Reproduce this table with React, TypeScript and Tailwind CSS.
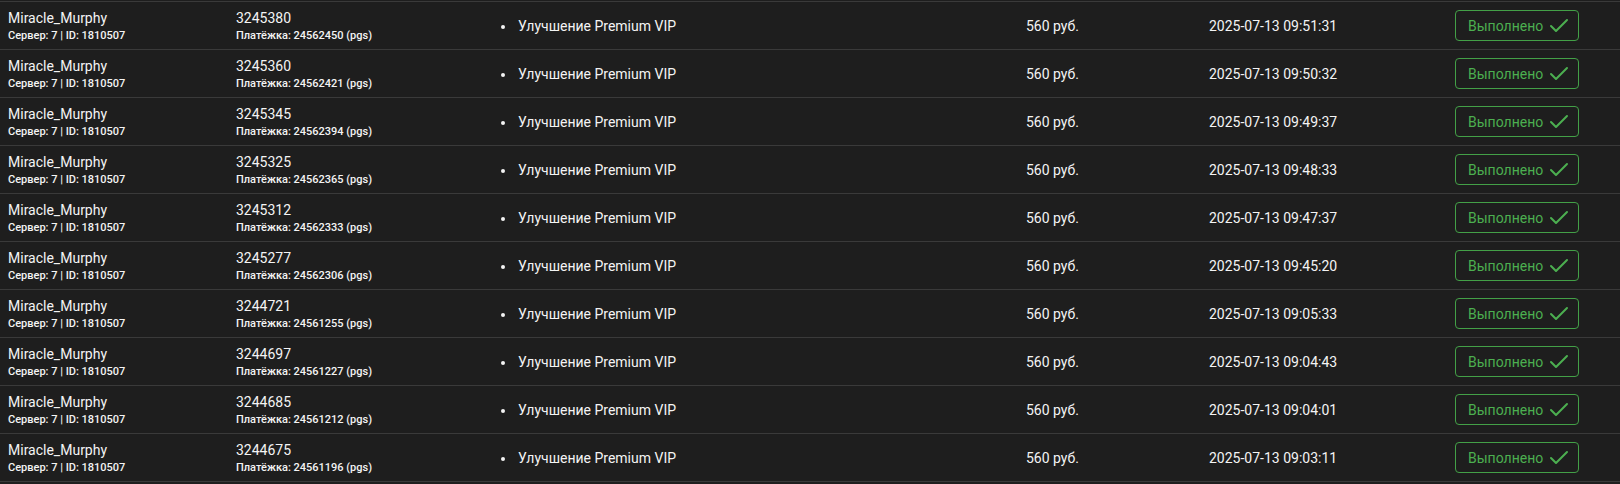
import { Check } from 'lucide-react';

const orders = [
  { id: '3245380', pay: '24562450', date: '2025-07-13 09:51:31' },
  { id: '3245360', pay: '24562421', date: '2025-07-13 09:50:32' },
  { id: '3245345', pay: '24562394', date: '2025-07-13 09:49:37' },
  { id: '3245325', pay: '24562365', date: '2025-07-13 09:48:33' },
  { id: '3245312', pay: '24562333', date: '2025-07-13 09:47:37' },
  { id: '3245277', pay: '24562306', date: '2025-07-13 09:45:20' },
  { id: '3244721', pay: '24561255', date: '2025-07-13 09:05:33' },
  { id: '3244697', pay: '24561227', date: '2025-07-13 09:04:43' },
  { id: '3244685', pay: '24561212', date: '2025-07-13 09:04:01' },
  { id: '3244675', pay: '24561196', date: '2025-07-13 09:03:11' },
];

export default function App() {
  return (
    <div
      className="min-h-screen bg-[#1e1e1e] pt-px text-[#f4f4f4]"
      style={{ fontFamily: 'Roboto, "Noto Sans", sans-serif' }}
    >
      {orders.map((o) => (
        <div
          key={o.id}
          className="flex h-12 items-center border-t border-[#3a3a3a] last:h-[49px] last:border-b"
        >
          {/* Player */}
          <div className="flex w-[236px] flex-col pl-2">
            <span className="text-sm leading-5">Miracle_Murphy</span>
            <span className="text-[11px] font-medium leading-4">Сервер: 7 | ID: 1810507</span>
          </div>

          {/* Order */}
          <div className="flex w-[248px] flex-col">
            <span className="text-sm leading-5">{o.id}</span>
            <span className="text-[11px] font-medium leading-4">Платёжка: {o.pay} (pgs)</span>
          </div>

          {/* Items */}
          <ul className="w-[542px] list-disc pl-8 text-sm">
            <li className="pl-0.5">Улучшение Premium VIP</li>
          </ul>

          {/* Price */}
          <div className="w-[183px] text-sm">560 руб.</div>

          {/* Date */}
          <div className="w-[246px] text-sm">{o.date}</div>

          {/* Status */}
          <div className="flex h-[31px] w-[124px] items-center justify-between rounded border border-[#43a047] pl-[12px] pr-[7px] text-sm text-[#4caf50]">
            <span>Выполнено</span>
            <Check className="h-6 w-6" strokeWidth={2} />
          </div>
        </div>
      ))}
    </div>
  );
}
